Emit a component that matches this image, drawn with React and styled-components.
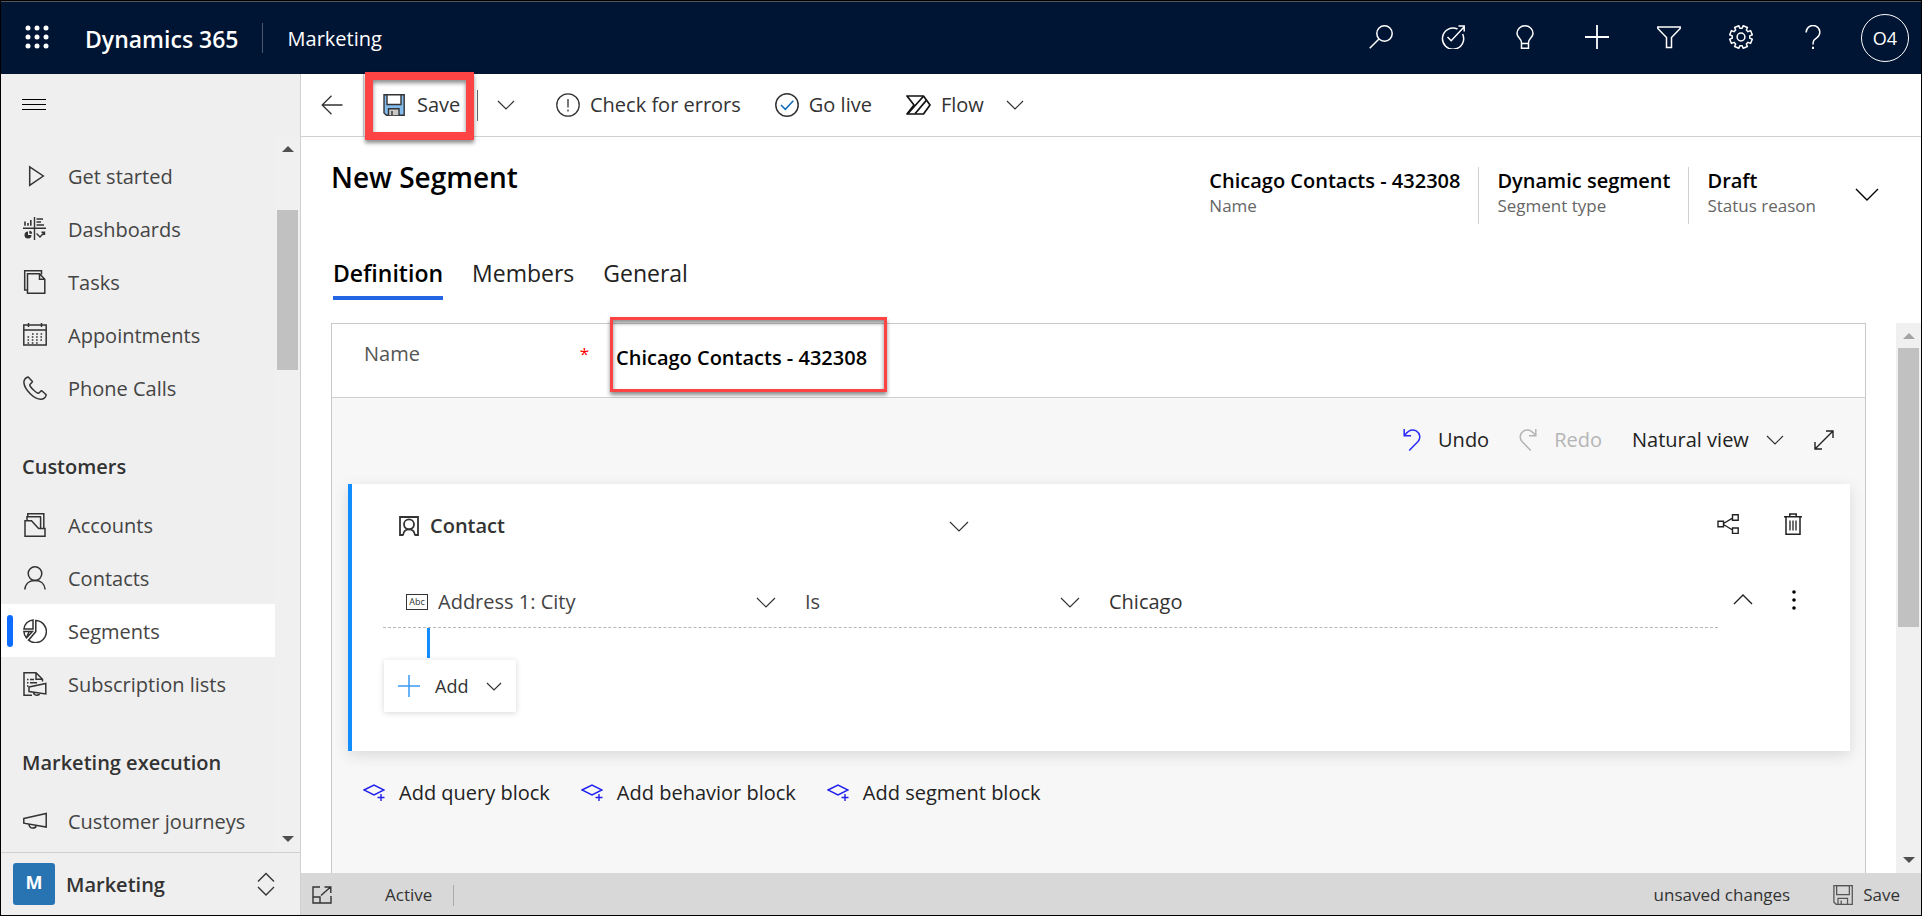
import React from "react";
import styled, { createGlobalStyle, css } from "styled-components";

const GlobalStyle = createGlobalStyle`
  *, *::before, *::after { box-sizing: border-box; }
  body { margin: 0; background: #fff; }
  body, button, input, select {
    font-family: "Open Sans", "Noto Sans", sans-serif;
    font-size: 20px;
    line-height: 28px;
    color: #333;
  }
  button, input, select { margin: 0; padding: 0; border: 0; background: none; border-radius: 0; outline: 0; }
  button { cursor: pointer; white-space: nowrap; }
  svg { display: block; flex: none; }
`;

/* ---------- icons ---------- */

const Svg = ({ w = 24, h = 24, sw = 1.5, children }) => (
  <svg width={w} height={h} viewBox={`0 0 ${w} ${h}`} fill="none" stroke="currentColor" strokeWidth={sw} aria-hidden="true">
    {children}
  </svg>
);

const Chevron = ({ w = 20, up, sw = 1.2 }) => {
  const h = Math.round(w / 2) + 1;
  return (
    <Svg w={w} h={h} sw={sw}>
      <path d={up ? `M1 ${h - 1} L${w / 2} 1 L${w - 1} ${h - 1}` : `M1 1 L${w / 2} ${h - 1} L${w - 1} 1`} />
    </Svg>
  );
};

const WaffleIcon = () => (
  <svg width="24" height="24" viewBox="0 0 24 24" fill="#fff" aria-hidden="true">
    {[3, 12, 21].map((y) => [3, 12, 21].map((x) => <circle key={`${x}-${y}`} cx={x} cy={y} r="2.5" />))}
  </svg>
);
const SearchIcon = () => <Svg><circle cx="15.5" cy="8.5" r="7.7" /><path d="M10 14 L.7 23.3" /></Svg>;
const TargetIcon = () => (
  <Svg>
    <path d="M16.5 4 A10.6 10.6 0 1 0 21.6 9" />
    <path d="M6.5 12 L10.2 15.7 L23 2 M17.5 1 H23.2 V6.5" />
  </Svg>
);
const BulbIcon = () => (
  <Svg>
    <path d="M8.5 17.5 C8.5 13.5 4 12.5 4 8.5 A8 7.7 0 0 1 20 8.5 C20 12.5 15.5 13.5 15.5 17.5 V23.2 H8.5 Z M8.5 18.5 H15.5" />
  </Svg>
);
const PlusIcon = () => <Svg sw={1.8}><path d="M12 0 V24 M0 12 H24" /></Svg>;
const FilterIcon = () => <Svg><path d="M.8 2 H23.2 V3.5 L14.5 12.5 V22.5 H9.5 V12.5 L.8 3.5 Z" /></Svg>;
const GearIcon = () => {
  const pts = [];
  for (let i = 0; i < 8; i++) {
    const base = (i * Math.PI) / 4 + Math.PI / 8;
    [[-0.26, 8.8], [-0.2, 11.5], [0.2, 11.5], [0.26, 8.8]].forEach(([a, r]) => {
      pts.push(`${(12 + r * Math.sin(base + a)).toFixed(2)},${(12 - r * Math.cos(base + a)).toFixed(2)}`);
    });
  }
  return <Svg><polygon points={pts.join(" ")} strokeLinejoin="round" /><circle cx="12" cy="12" r="3.9" /></Svg>;
};
const HelpIcon = () => (
  <Svg>
    <path d="M5.2 7.5 A6.8 6.7 0 1 1 16 12.6 C13 14.7 12 15.8 12 19.5" />
    <path d="M12 21.8 V24" strokeWidth="2" />
  </Svg>
);
const BurgerIcon = () => <Svg h={12} sw={1}><path d="M0 .5 H24 M0 5.5 H24 M0 10.5 H24" stroke="#000" /></Svg>;
const BackIcon = () => <Svg w={22} h={20} sw={1.3}><path d="M1 10 H21.5 M10.5 .8 L1.2 10 L10.5 19.2" /></Svg>;

const PlayIcon = () => <Svg><path d="M6.7 2.8 V21.4 L20.3 12 Z" /></Svg>;
const DashboardIcon = () => (
  <Svg sw={1.4}>
    <path d="M0 11.3 H23 M11.5 0 V23" />
    <path d="M2 8.8 V4.5 M5 8.8 V6 M7.8 8.8 V3 M13.5 2 H20 M13.5 5 H18 M13.5 8 H21" strokeWidth="1.6" />
    <path d="M5 14.5 A3.5 3.5 0 1 0 8.5 18 H5 Z" fill="currentColor" stroke="none" />
    <path d="M6.3 13.8 A3 3 0 0 1 9.2 16.7 H6.3 Z" fill="currentColor" stroke="none" />
    <path d="M13.5 16.5 L17 20 L21.5 15.3 M18.5 15.3 H21.5 V18" />
  </Svg>
);
const TasksIcon = () => (
  <Svg>
    <path d="M4.5 20 H1.7 V.8 H18.5 V4.5 M4.5 23.2 V3.8 H16.5 L21.8 9.2 V23.2 Z M16.5 3.8 V9.2 H21.8" />
  </Svg>
);
const CalendarIcon = () => (
  <Svg>
    <path d="M.8 2 H23.2 V22 H.8 Z M.8 7 H23.2 M5.5 0 V4 M18.5 0 V4" />
    <path d="M9 11 H20.5 M4.5 14 H20.5 M4.5 17 H20.5 M4.5 20 H16.5" strokeDasharray="1.6 2.7" strokeWidth="1.7" />
  </Svg>
);
const PhoneIcon = () => (
  <Svg>
    <path d="M5.2 .9 C2.5 1.6 .8 3.6 .9 6.6 C1.2 10 3.8 14.3 7.2 17.7 C10.6 21 14.5 23.2 17.8 23.2 C20.5 23.2 22.6 21.4 23.2 18.8 L18.8 14.8 C17.6 14.5 16.8 16.8 15.3 17.3 C13.6 17.5 6.6 10.6 6.8 8.9 C7 7.4 9.8 6.6 9.4 5.4 Z" strokeLinejoin="round" />
  </Svg>
);
const AccountIcon = () => (
  <Svg>
    <path d="M4 7.6 V3.8 H18 M4.8 3.8 V.8 H20.8 V15.5 M17.6 3.8 V15.5 M2 7.8 H8.5 L15.6 15.6 H22 V23.2 H2 Z" />
  </Svg>
);
const PersonIcon = () => <Svg><circle cx="12" cy="7.6" r="6.8" /><path d="M1.8 23.5 C2.3 17.5 6.5 14.4 12 14.4 S21.7 17.5 22.2 23.5" /></Svg>;
const SegmentIcon = () => (
  <Svg>
    <path d="M12.8 1.6 A11 11 0 1 1 5.5 21.2 L12.8 12.6 Z" />
    <path d="M10 .9 V10 H.9 A10 10 0 0 1 10 .9 Z M.9 12.6 H9.4 L3.5 19 A10 10 0 0 1 .9 12.6 Z M6 13 L3.5 18.5" />
  </Svg>
);
const SubscriptionIcon = () => (
  <Svg>
    <path d="M9 23.2 H1 V.8 H13 L19.5 7.3 V9.5 M13 .8 V7.3 H19.5" />
    <path d="M4 7.5 H5.5 M7 7.5 H11 M4 10.8 H5.5 M7 10.8 H14 M4 14 H5.5" />
    <path d="M6 15 L22.8 11.5 V22 L6 19.6 Z M10.5 20.5 C11 24 16 24 16.8 21.2" />
  </Svg>
);
const MegaphoneIcon = () => <Svg h={18}><path d="M.8 6.5 L23.2 1.5 V15 L.8 11.2 Z M6 12.2 C6.5 17.3 12.5 17 13.2 13.5" /></Svg>;
const UpDownIcon = () => <Svg w={18} h={24} sw={1.4}><path d="M1 9.5 L9 1.5 L17 9.5 M1 15 L9 23 L17 15" /></Svg>;

const SaveIcon = ({ size = 22, color }) => (
  <svg width={size} height={size} viewBox="0 0 22 22" fill="none" stroke="currentColor" strokeWidth="1.4" aria-hidden="true">
    <path d="M1 .8 H21.2 V21.2 H3.5 L1 19 Z" fill={color ? "#83bbec" : "none"} />
    <path d="M4 .8 H18 V10.5 H4 Z" fill={color ? "#fff" : "none"} />
    <path d="M5.5 21.2 V14.8 H16 V21.2" fill={color ? "#c8c8c8" : "none"} />
    <path d="M9 17 V21" />
  </svg>
);
const AlertIcon = () => <Svg sw={1.3}><circle cx="12" cy="12" r="11.2" /><path d="M12 6 V14.5 M12 16.5 V18.5" /></Svg>;
const CheckIcon = () => <Svg sw={1.5}><circle cx="12" cy="12" r="11.2" /><path d="M6 12 L10.3 16.3 L18.3 7.7" stroke="#0f6cbd" /></Svg>;
const FlowIcon = () => (
  <Svg w={25} h={20}>
    <g stroke="#111" strokeWidth="1.7" strokeLinejoin="round">
      <path d="M1 1 H17.5 L24 10 L17.5 19 H1 L8 10 Z" />
      <path d="M2 18.5 L17.5 1.2 M9 18.8 L20.3 5.4" />
    </g>
  </Svg>
);
const UndoIcon = () => <Svg w={18} h={22} sw={1.5}><path d="M1.2 0 V6.8 H8 M1.5 6.5 C5.5 .8 10 .2 13.2 1.8 C17.3 4.2 17.8 9.2 15 12.6 L6.2 21.5" /></Svg>;
const RedoIcon = () => <Svg w={18} h={22} sw={1.5}><path d="M16.8 0 V6.8 H10 M16.5 6.5 C12.5 .8 8 .2 4.8 1.8 C.7 4.2 .2 9.2 3 12.6 L11.8 21.5" /></Svg>;
const ExpandIcon = () => <Svg w={20} h={20} sw={1.4}><path d="M1 19 L19 1 M12 1 H19 V8 M1 12 V19 H8" /></Svg>;
const BadgeIcon = () => (
  <Svg w={20} h={20} sw={1.8}>
    <path d="M4 19 H1 V1 H19 V19 H16" />
    <circle cx="10" cy="8.3" r="5" />
    <path d="M4 19.5 C4.4 15.3 6.8 13.3 10 13.3 S15.6 15.3 16 19.5" />
  </Svg>
);
const ShareIcon = () => (
  <Svg w={22} h={20} sw={1.4}>
    <path d="M1 7.2 H6.5 V12.8 H1 Z M15.5 .8 H21.2 V6.2 H15.5 Z M15.5 14 H21.2 V19.4 H15.5 Z M6.5 9.5 L15.5 4.2 M6.5 10.5 L15.5 16" />
  </Svg>
);
const TrashIcon = () => (
  <Svg w={18} h={22} sw={1.5}>
    <path d="M0 3.7 H18 M5.8 3.5 V1 H12.2 V3.5 M2 3.7 V21.2 H16 V3.7" />
    <path d="M6 7.5 V17.5 M9 7.5 V17.5 M12 7.5 V17.5" strokeWidth="1.3" />
  </Svg>
);
const MoreIcon = () => (
  <svg width="4" height="20" viewBox="0 0 4 20" fill="#000" aria-hidden="true">
    <circle cx="2" cy="2" r="1.8" /><circle cx="2" cy="10" r="1.8" /><circle cx="2" cy="18" r="1.8" />
  </svg>
);
const BlockIcon = () => <Svg w={22} h={18} sw={1.4}><path d="M1 6 L11 1 L21 6 L11 11 Z M18 10 V17 M14.5 13.5 H21.5" /></Svg>;
const PopoutIcon = () => <Svg w={20} h={18} sw={1.4}><path d="M8 1 H1 V17 H19 V10 M1 11 H8 V17 M9 9.5 L18.5 1 M12.5 1 H18.8 V7" /></Svg>;

/* ---------- frame ---------- */

const Shell = styled.div`
  display: flex;
  flex-direction: column;
  height: 100vh;
  border: 1px solid #000;
  overflow: hidden;
`;

const TopBar = styled.header`
  display: flex;
  align-items: center;
  flex: none;
  height: 73px;
  padding: 0 12px 0 24px;
  background: #001433;
  border-top: 1px solid #555;
  color: #fff;
`;
const Product = styled.span`
  margin-left: 36px;
  padding-top: 2px;
  font-size: 23px;
  font-weight: 600;
`;
const TopDivider = styled.span`
  width: 1px;
  height: 30px;
  margin: 0 25px 0 23px;
  background: #47556d;
`;
const AppName = styled.span`
  flex: 1;
  padding-top: 2px;
`;
const TopButton = styled.button`
  display: flex;
  justify-content: center;
  width: ${(p) => (p.$snug ? 24 : 72)}px;
  padding-bottom: 2px;
  color: #fff;
`;
const Avatar = styled.button`
  width: 48px;
  height: 48px;
  margin-left: 12px;
  border: 1px solid #fff;
  border-radius: 50%;
  color: #fff;
  font-size: 18px;
`;

const Body = styled.div`
  display: flex;
  flex: 1;
  min-height: 0;
`;

/* ---------- scroll bar ---------- */

const Track = styled.div`
  display: flex;
  flex-direction: column;
  align-items: center;
  flex: none;
  width: 25px;
  padding: 10px 0;
  background: #f0f0f0;
`;
const Arrow = styled.span`
  border: 6px solid transparent;
  border-top-width: 0;
  border-bottom: 6px solid ${(p) => p.$color || "#505050"};
  ${(p) => p.$down && css`
    margin-top: auto;
    border-top: 6px solid #505050;
    border-bottom-width: 0;
  `}
`;
const Thumb = styled.div`
  width: 21px;
  height: ${(p) => p.$size};
  margin-top: ${(p) => p.$offset};
  background: #c1c1c1;
`;

/* ---------- side navigation ---------- */

const Sidebar = styled.aside`
  display: flex;
  flex-direction: column;
  flex: none;
  width: 300px;
  background: #efefef;
  border-right: 1px solid #d0d0d0;
`;
const BurgerButton = styled.button`
  align-self: flex-start;
  flex: none;
  height: 62px;
  padding: 0 21px;
`;
const NavArea = styled.div`
  display: flex;
  flex: 1;
  min-height: 0;
  overflow: hidden;
`;
const Nav = styled.nav`
  flex: 1;
  padding-top: 13px;
`;
const NavHeading = styled.h2`
  margin: 0;
  padding: 39px 21px 17px;
  font-size: 20px;
  line-height: 28px;
  font-weight: 600;
`;
const NavList = styled.ul`
  margin: 0;
  padding: 0;
  list-style: none;
`;
const NavLink = styled.a`
  display: flex;
  align-items: center;
  gap: 21px;
  height: 53px;
  padding-left: 22px;
  color: #444;
  text-decoration: none;
  white-space: nowrap;
  svg { color: #333; }
  ${(p) => p.$active && css`
    padding-left: 6px;
    background: #fff;
    &::before {
      content: "";
      width: 6px;
      height: 32px;
      margin-right: -11px;
      border-radius: 3px;
      background: #0b6cff;
    }
  `}
`;
const NavText = styled.span`
  padding-top: 2px;
`;
const AreaSwitch = styled.button`
  display: flex;
  align-items: center;
  flex: none;
  height: 63px;
  padding: 0 25px 0 12px;
  border-top: 1px solid #d0d0d0;
  font-weight: 600;
  text-align: left;
`;
const AreaTile = styled.span`
  width: 42px;
  height: 42px;
  border-radius: 3px;
  background: #2874b2;
  color: #fff;
  font-size: 18px;
  line-height: 38px;
  font-weight: 700;
  text-align: center;
`;
const AreaName = styled.span`
  flex: 1;
  padding: 2px 0 0 11px;
`;

/* ---------- command bar ---------- */

const Main = styled.main`
  display: flex;
  flex-direction: column;
  flex: 1;
  min-width: 0;
`;
const CommandBar = styled.div`
  display: flex;
  align-items: center;
  flex: none;
  height: 63px;
  border-bottom: 1px solid #d0d0d0;
`;
const Command = styled.button`
  display: flex;
  align-items: center;
  gap: ${(p) => p.$gap || 10}px;
  height: 62px;
  padding: ${(p) => p.$pad || "0 17px"};
`;
const CommandLabel = styled.span`
  padding-right: ${(p) => (p.$menu ? 12 : 0)}px;
`;
const CommandRule = styled.span`
  width: 1px;
  height: ${(p) => (p.$full ? "100%" : "31px")};
  background: ${(p) => (p.$full ? "#d0d0d0" : "#666")};
`;
const Marked = styled.div`
  position: relative;
  display: flex;
  width: ${(p) => p.$width}px;
  margin: ${(p) => p.$margin || 0};
  &::after {
    content: "";
    position: absolute;
    inset: ${(p) => p.$inset};
    border: ${(p) => p.$line}px solid #fc4444;
    box-shadow: 0 3px 4px rgba(0, 0, 0, 0.45), inset 0 3px 4px rgba(0, 0, 0, 0.45);
    pointer-events: none;
  }
`;

/* ---------- record header ---------- */

const RecordHeader = styled.section`
  display: flex;
  align-items: flex-start;
  flex: none;
  padding: 22px 42px 0 30px;
`;
const Title = styled.h1`
  flex: 1;
  margin: 0;
  font-size: 28px;
  line-height: 36px;
  font-weight: 600;
  color: #000;
`;
const Summary = styled.dl`
  display: flex;
  margin: 8px 0 0;
`;
const Fact = styled.div`
  display: flex;
  flex-direction: column-reverse;
  justify-content: flex-end;
  height: 57px;
  padding: 0 18px;
  & + & { border-left: 1px solid #d0d0d0; }
`;
const FactValue = styled.dd`
  margin: 0;
  line-height: 27px;
  font-weight: 600;
  color: #000;
`;
const FactLabel = styled.dt`
  font-size: 17px;
  line-height: 24px;
  color: #666;
`;
const ExpandHeader = styled.button`
  margin: 29px 0 0 21px;
  color: #000;
`;

const TabList = styled.div`
  display: flex;
  gap: 29px;
  flex: none;
  padding: 31px 0 23px 32px;
`;
const Tab = styled.button`
  padding-bottom: 5px;
  border-bottom: 4px solid ${(p) => (p.$active ? "#2266e3" : "transparent")};
  font-size: 23px;
  line-height: 36px;
  font-weight: ${(p) => (p.$active ? 600 : 400)};
  color: ${(p) => (p.$active ? "#000" : "#222")};
`;

/* ---------- segment form ---------- */

const Workspace = styled.div`
  display: flex;
  gap: 30px;
  flex: 1;
  min-height: 0;
  padding-left: 30px;
`;
const Form = styled.form`
  display: flex;
  flex-direction: column;
  flex: 1;
  min-width: 0;
  border: 1px solid #c8c8c8;
  border-bottom: 0;
`;
const NameRow = styled.div`
  display: flex;
  flex: none;
  height: 74px;
  padding-left: 32px;
  border-bottom: 1px solid #d0d0d0;
`;
const NameLabel = styled.label`
  display: flex;
  justify-content: space-between;
  width: 246px;
  padding: 16px 21px 0 0;
  color: #555;
`;
const Required = styled.span`
  font-size: 17px;
  color: #f00;
`;
const NameInput = styled.input`
  width: 100%;
  height: 66px;
  padding-left: 6px;
  font-weight: 600;
  color: #000;
`;
const Designer = styled.div`
  flex: 1;
  padding: 0 15px 0 16px;
  background: #f7f7f7;
`;
const DesignerTools = styled.div`
  display: flex;
  align-items: center;
  justify-content: flex-end;
  gap: 30px;
  height: 86px;
  padding: 0 16px 2px 0;
`;
const Tool = styled.button`
  display: flex;
  align-items: center;
  gap: 17px;
  color: ${(p) => (p.disabled ? "#b5b5b5" : "#222")};
  svg { color: ${(p) => p.$icon || "inherit"}; }
`;
const SelectBox = styled.label`
  display: flex;
  align-items: center;
  gap: ${(p) => p.$gap || 0}px;
  color: #333;
`;
const Select = styled.select`
  appearance: none;
  flex: ${(p) => (p.$grow ? 1 : "none")};
  min-width: 0;
  font-weight: ${(p) => (p.$strong ? 600 : 400)};
  color: ${(p) => p.$color || "#333"};
`;
const Block = styled.section`
  height: 267px;
  padding: 0 37px 0 31px;
  border-left: 4px solid #118dff;
  background: #fff;
  box-shadow: 0 4px 14px rgba(0, 0, 0, 0.12);
`;
const BlockRow = styled.div`
  display: flex;
  align-items: center;
  height: ${(p) => p.$height}px;
  padding-top: ${(p) => p.$drop || 0}px;
`;
const EntityCell = styled.div`
  flex: 0 1 586px;
  padding: 0 0 2px 16px;
`;
const RowActions = styled.div`
  display: flex;
  align-items: center;
  justify-content: space-between;
  width: ${(p) => p.$width}px;
  margin: ${(p) => p.$margin || "0 0 0 auto"};
  padding: 0 ${(p) => p.$edge}px 6px 0;
  color: #222;
`;
const IconButton = styled.button`
  color: inherit;
`;
const Condition = styled.div`
  display: grid;
  flex: 1;
  grid-template-columns: 393fr 304fr 638fr;
  height: 51px;
  border-bottom: 1px dashed #b8b8b8;
`;
const AttributeCell = styled.div`
  display: grid;
  padding: 0 0 0 23px;
`;
const Cell = styled.div`
  display: grid;
  padding-left: 29px;
`;
const ValueInput = styled.input`
  width: 100%;
  color: #333;
`;
const AbcBox = styled.span`
  width: 22px;
  height: 16px;
  border: 1px solid #333;
  font-size: 9px;
  line-height: 14px;
  text-align: center;
`;
const Connector = styled.div`
  width: 3px;
  height: 30px;
  margin: 0 0 2px 44px;
  background: #118dff;
`;
const AddButton = styled.button`
  display: flex;
  align-items: center;
  gap: 15px;
  height: 52px;
  margin-left: 1px;
  padding: 0 14px;
  background: #fff;
  box-shadow: 0 1px 6px rgba(0, 0, 0, 0.16);
  font-size: 18px;
  svg:first-child { color: #3a9bf5; }
  svg:last-child { margin-left: 3px; }
`;
const AddBlocks = styled.div`
  display: flex;
  gap: 31px;
  padding: 28px 0 0 15px;
`;
const AddBlock = styled.button`
  display: flex;
  align-items: center;
  gap: 14px;
  color: #222;
  svg { color: #1f1ff0; }
`;

/* ---------- status bar ---------- */

const StatusBar = styled.footer`
  display: flex;
  align-items: center;
  flex: none;
  height: 42px;
  padding: 2px 21px 0 11px;
  background: #d8d8d8;
  font-size: 17px;
`;
const StatusText = styled.span`
  padding: ${(p) => p.$pad};
`;
const StatusRule = styled.span`
  width: 1px;
  height: 21px;
  margin-right: auto;
  background: #aaa;
`;
const StatusSave = styled.button`
  display: flex;
  align-items: center;
  gap: 10px;
  font-size: 17px;
  svg { color: #555; }
`;

const navGroups = [
  {
    items: [
      ["Get started", PlayIcon],
      ["Dashboards", DashboardIcon],
      ["Tasks", TasksIcon],
      ["Appointments", CalendarIcon],
      ["Phone Calls", PhoneIcon],
    ],
  },
  {
    heading: "Customers",
    items: [
      ["Accounts", AccountIcon],
      ["Contacts", PersonIcon],
      ["Segments", SegmentIcon],
      ["Subscription lists", SubscriptionIcon],
    ],
  },
  { heading: "Marketing execution", items: [["Customer journeys", MegaphoneIcon]] },
];

const topActions = [
  ["Search", SearchIcon],
  ["Assistant", TargetIcon],
  ["Insights", BulbIcon],
  ["New", PlusIcon],
  ["Filter", FilterIcon],
  ["Settings", GearIcon],
  ["Help", HelpIcon],
];

const facts = [
  ["Name", "Chicago Contacts - 432308"],
  ["Segment type", "Dynamic segment"],
  ["Status reason", "Draft"],
];

export default function App() {
  return (
    <Shell>
      <GlobalStyle />
      <TopBar>
        <TopButton $snug aria-label="Apps"><WaffleIcon /></TopButton>
        <Product>Dynamics 365</Product>
        <TopDivider />
        <AppName>Marketing</AppName>
        {topActions.map(([label, Icon]) => (
          <TopButton key={label} aria-label={label}><Icon /></TopButton>
        ))}
        <Avatar>O4</Avatar>
      </TopBar>

      <Body>
        <Sidebar>
          <BurgerButton aria-label="Toggle navigation"><BurgerIcon /></BurgerButton>
          <NavArea>
            <Nav>
              {navGroups.map((group, i) => (
                <React.Fragment key={i}>
                  {group.heading && <NavHeading>{group.heading}</NavHeading>}
                  <NavList>
                    {group.items.map(([label, Icon]) => (
                      <li key={label}>
                        <NavLink href="#" $active={label === "Segments"}>
                          <Icon />
                          <NavText>{label}</NavText>
                        </NavLink>
                      </li>
                    ))}
                  </NavList>
                </React.Fragment>
              ))}
            </Nav>
            <Track>
              <Arrow />
              <Thumb $size="160px" $offset="58px" />
              <Arrow $down />
            </Track>
          </NavArea>
          <AreaSwitch>
            <AreaTile>M</AreaTile>
            <AreaName>Marketing</AreaName>
            <UpDownIcon />
          </AreaSwitch>
        </Sidebar>

        <Main>
          <CommandBar>
            <Command $pad="0 20px" aria-label="Back"><BackIcon /></Command>
            <CommandRule $full />
            <Marked $width={109} $margin="0 3px 0 1px" $inset="-2px 0 -4px 0" $line={8}>
              <Command $gap={12} $pad="0 18px"><SaveIcon color />Save</Command>
            </Marked>
            <CommandRule />
            <Command $pad="0 24px 0 19px" aria-label="More save options"><Chevron w={18} /></Command>
            <Command><AlertIcon /><CommandLabel>Check for errors</CommandLabel></Command>
            <Command><CheckIcon /><CommandLabel>Go live</CommandLabel></Command>
            <Command><FlowIcon /><CommandLabel $menu>Flow</CommandLabel><Chevron w={18} /></Command>
          </CommandBar>

          <RecordHeader>
            <Title>New Segment</Title>
            <Summary>
              {facts.map(([label, value]) => (
                <Fact key={label}>
                  <FactLabel>{label}</FactLabel>
                  <FactValue>{value}</FactValue>
                </Fact>
              ))}
            </Summary>
            <ExpandHeader aria-label="Expand header"><Chevron w={24} sw={1.4} /></ExpandHeader>
          </RecordHeader>

          <TabList role="tablist">
            <Tab role="tab" aria-selected="true" $active>Definition</Tab>
            <Tab role="tab" aria-selected="false">Members</Tab>
            <Tab role="tab" aria-selected="false">General</Tab>
          </TabList>

          <Workspace>
            <Form onSubmit={(e) => e.preventDefault()}>
              <NameRow>
                <NameLabel htmlFor="segment-name">
                  Name <Required>*</Required>
                </NameLabel>
                <Marked $width={277} $inset="-7px 0 5px 0" $line={3}>
                  <NameInput id="segment-name" defaultValue="Chicago Contacts - 432308" />
                </Marked>
              </NameRow>
              <Designer>
                <DesignerTools>
                  <Tool type="button" $icon="#2b2bf5"><UndoIcon />Undo</Tool>
                  <Tool type="button" disabled><RedoIcon />Redo</Tool>
                  <SelectBox $gap={17}>
                    <Select aria-label="View" $color="#222"><option>Natural view</option></Select>
                    <Chevron w={18} />
                  </SelectBox>
                  <Tool type="button" aria-label="Full screen"><ExpandIcon /></Tool>
                </DesignerTools>

                <Block>
                  <BlockRow $height={86}>
                    <EntityCell>
                      <SelectBox $gap={11}>
                        <BadgeIcon />
                        <Select aria-label="Entity" $grow $strong><option>Contact</option></Select>
                        <Chevron />
                      </SelectBox>
                    </EntityCell>
                    <RowActions $width={96} $edge={11}>
                      <IconButton type="button" aria-label="Relationships"><ShareIcon /></IconButton>
                      <IconButton type="button" aria-label="Delete"><TrashIcon /></IconButton>
                    </RowActions>
                  </BlockRow>
                  <BlockRow $height={58} $drop={7}>
                    <Condition>
                      <AttributeCell>
                        <SelectBox $gap={10}>
                          <AbcBox>Abc</AbcBox>
                          <Select aria-label="Attribute" $grow $color="#444"><option>Address 1: City</option></Select>
                          <Chevron />
                        </SelectBox>
                      </AttributeCell>
                      <Cell>
                        <SelectBox>
                          <Select aria-label="Operator" $grow $color="#444"><option>Is</option></Select>
                          <Chevron />
                        </SelectBox>
                      </Cell>
                      <Cell>
                        <ValueInput aria-label="Value" defaultValue="Chicago" />
                      </Cell>
                    </Condition>
                    <RowActions $width={80} $edge={17} $margin="0 0 0 15px">
                      <IconButton type="button" aria-label="Collapse"><Chevron up sw={1.4} /></IconButton>
                      <IconButton type="button" aria-label="More"><MoreIcon /></IconButton>
                    </RowActions>
                  </BlockRow>
                  <Connector />
                  <AddButton type="button">
                    <Svg w={22} h={22}><path d="M11 0 V22 M0 11 H22" /></Svg>
                    Add
                    <Chevron w={16} />
                  </AddButton>
                </Block>

                <AddBlocks>
                  <AddBlock type="button"><BlockIcon />Add query block</AddBlock>
                  <AddBlock type="button"><BlockIcon />Add behavior block</AddBlock>
                  <AddBlock type="button"><BlockIcon />Add segment block</AddBlock>
                </AddBlocks>
              </Designer>
            </Form>
            <Track>
              <Arrow $color="#a3a3a3" />
              <Thumb $size="279px" $offset="9px" />
              <Arrow $down />
            </Track>
          </Workspace>

          <StatusBar>
            <PopoutIcon />
            <StatusText $pad="0 21px 0 53px">Active</StatusText>
            <StatusRule />
            <StatusText $pad="0 43px 0 0">unsaved changes</StatusText>
            <StatusSave><SaveIcon size={20} />Save</StatusSave>
          </StatusBar>
        </Main>
      </Body>
    </Shell>
  );
}
